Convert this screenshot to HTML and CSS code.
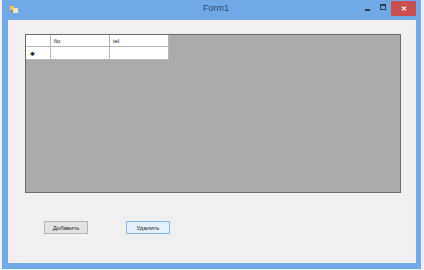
FILE: index.html
```html
<!DOCTYPE html>
<html>
    <head>
        <meta charset="utf-8">
        <link rel="stylesheet" href="styles.css">
        <title>Form1</title>
    </head>
    <body>
        <div class="window">
            <div class="titlebar">
                <div class="appicon">
                    <svg width="8" height="8" viewBox="0 0 8 8">
                        <rect x="0" y="1" width="4" height="4" fill="#f2c14e"/>
                        <rect x="3" y="3" width="5" height="5" fill="#e9e4c8"/>
                        <rect x="1" y="5" width="2" height="2" fill="#7aa04a"/>
                    </svg>
                </div>
                <div class="title">Form1</div>
                <div class="controls">
                    <div class="ctl min"><span></span></div>
                    <div class="ctl max"><span></span></div>
                    <div class="ctl close">&#x2715;</div>
                </div>
            </div>
            <div class="client">
                <div class="grid">
                    <table class="cells">
                        <thead>
                            <tr>
                                <th class="rowhead"></th>
                                <th>fio</th>
                                <th>tel</th>
                            </tr>
                        </thead>
                        <tbody>
                            <tr>
                                <td class="rowhead">&#x2731;</td>
                                <td></td>
                                <td></td>
                            </tr>
                        </tbody>
                    </table>
                </div>
                <div class="buttons">
                    <button type="button" class="btn">Добавить</button>
                    <button type="button" class="btn default">Удалить</button>
                </div>
            </div>
        </div>
    </body>
</html>
```

FILE: styles.css
```css
body {
    margin: 0;
    padding: 0;
    background-color: #eef1f4;
    font-family: "Segoe UI", "Liberation Sans", Arial, sans-serif;
}

.window {
    margin-left: 2px;
    width: 419px;
    height: 269px;
    background-color: #71a9e6;
    box-sizing: border-box;
    padding: 0 5px 6px 6px;
    display: flex;
    flex-direction: column;
}

.titlebar {
    height: 20px;
    display: flex;
    align-items: flex-start;
    position: relative;
}

.appicon {
    margin-top: 5px;
    margin-left: 2px;
    height: 8px;
}

.appicon svg {
    display: block;
}

.title {
    position: absolute;
    left: 0;
    right: 0;
    top: 3px;
    text-align: center;
    font-size: 9px;
    color: #2e4d74;
    padding-left: 8px;
}

.controls {
    margin-left: auto;
    display: flex;
    align-items: flex-start;
    margin-right: 0;
}

.ctl {
    width: 16px;
    height: 15px;
    display: flex;
    align-items: center;
    justify-content: center;
}

.min span {
    width: 5px;
    height: 2px;
    margin-top: 4px;
    background-color: #2d3e55;
}

.max span {
    width: 4px;
    height: 3px;
    margin-top: -2px;
    border: 1px solid #2d3e55;
    border-top-width: 2px;
}

.ctl.close {
    margin-top: 1px;
    width: 25px;
    background-color: #c9504f;
    color: #fff;
    font-size: 7px;
    font-weight: bold;
}

.client {
    flex: 1;
    background-color: #f0f0f0;
    padding: 14px 0 0 17px;
}

.grid {
    width: 376px;
    height: 159px;
    box-sizing: border-box;
    border: 1px solid #6b6b6b;
    background-color: #ababab;
}

.cells {
    border-collapse: collapse;
    border-spacing: 0;
    font-size: 6px;
    color: #222;
}

.cells th,
.cells td {
    background-color: #fff;
    border: 1px solid #b8b8b8;
    border-top: none;
    border-left: none;
    padding: 0 0 0 3px;
    text-align: left;
    font-weight: normal;
    width: 55px;
}

.cells th {
    height: 11px;
}

.cells td {
    height: 12px;
}

.cells .rowhead {
    width: 20px;
    padding-left: 4px;
    font-size: 6px;
}

.buttons {
    display: flex;
    gap: 38px;
    margin-top: 28px;
    margin-left: 19px;
}

.btn {
    width: 44px;
    height: 13px;
    padding: 0;
    font-family: inherit;
    font-size: 6px;
    color: #222;
    background-color: #e3e3e3;
    border: 1px solid #b3b3b3;
    border-radius: 0;
}

.btn.default {
    background-color: #e6f0fa;
    border-color: #8ab8e8;
}
```
